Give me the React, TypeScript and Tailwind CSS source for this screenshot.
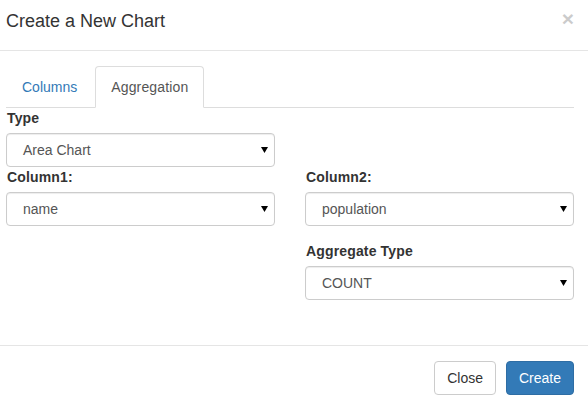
import React from "react";

function Caret() {
  return (
    <svg width="7" height="6" viewBox="0 0 7 6" className="shrink-0">
      <polygon points="0,0 7,0 3.5,6" fill="#000" />
    </svg>
  );
}

function FakeSelect({ value, className = "" }: { value: string; className?: string }) {
  return (
    <div
      className={`flex h-[34px] items-center justify-between rounded-[4px] border border-[#ccc] bg-white pl-[16px] pr-[6px] text-[14px] text-[#555] shadow-[inset_0_1px_1px_rgba(0,0,0,0.075)] ${className}`}
    >
      <span>{value}</span>
      <Caret />
    </div>
  );
}

function Label({ children }: { children: React.ReactNode }) {
  return (
    <label className="mb-[5px] block pl-px text-[14px] font-bold leading-[20px] tracking-[0.15px] text-[#333]">{children}</label>
  );
}

export default function App() {
  return (
    <div className="w-[588px] bg-white font-['Liberation_Sans',Arial,sans-serif] text-[14px] leading-[20px] text-[#333]">
      {/* header */}
      <div className="flex h-[51px] items-start justify-between border-b border-[#e5e5e5] pl-[6px] pr-[14px] pt-[8px]">
        <h4 className="text-[18px] leading-[26px] text-[#333]">Create a New Chart</h4>
        <button className="pt-0 text-[21px] font-bold leading-[21px] text-black opacity-20">×</button>
      </div>

      {/* body */}
      <div className="h-[294px] pl-[6px] pr-[14px] pt-[15px]">
        <ul className="flex border-b border-[#ddd]">
          <li className="-mb-px mr-[2px]">
            <a className="block rounded-t-[4px] border border-transparent px-[15px] py-[10px] leading-[20px] text-[#337ab7]">Columns</a>
          </li>
          <li className="-mb-px mr-[2px]">
            <a className="block rounded-t-[4px] border border-[#ddd] border-b-transparent bg-white px-[15px] py-[10px] leading-[20px] tracking-[0.15px] text-[#555]">
              Aggregation
            </a>
          </li>
        </ul>

        <div className="w-[269px]">
          <Label>Type</Label>
          <FakeSelect value="Area Chart" />
        </div>

        <div className="grid grid-cols-2 gap-x-[30px]">
          <div>
            <Label>Column1:</Label>
            <FakeSelect value="name" />
          </div>
          <div>
            <Label>Column2:</Label>
            <FakeSelect value="population" />
            <div className="mt-[15px]">
              <Label>Aggregate Type</Label>
              <FakeSelect value="COUNT" />
            </div>
          </div>
        </div>
      </div>

      {/* footer */}
      <div className="flex justify-end gap-[10px] border-t border-[#e5e5e5] pr-[14px] pt-[15px] pb-[15px]">
        <button className="h-[34px] rounded-[4px] border border-[#ccc] bg-white px-[12px] text-[14px] text-[#333]">Close</button>
        <button className="h-[34px] rounded-[4px] border border-[#2e6da4] bg-[#337ab7] px-[12px] text-[14px] text-white">Create</button>
      </div>
    </div>
  );
}
